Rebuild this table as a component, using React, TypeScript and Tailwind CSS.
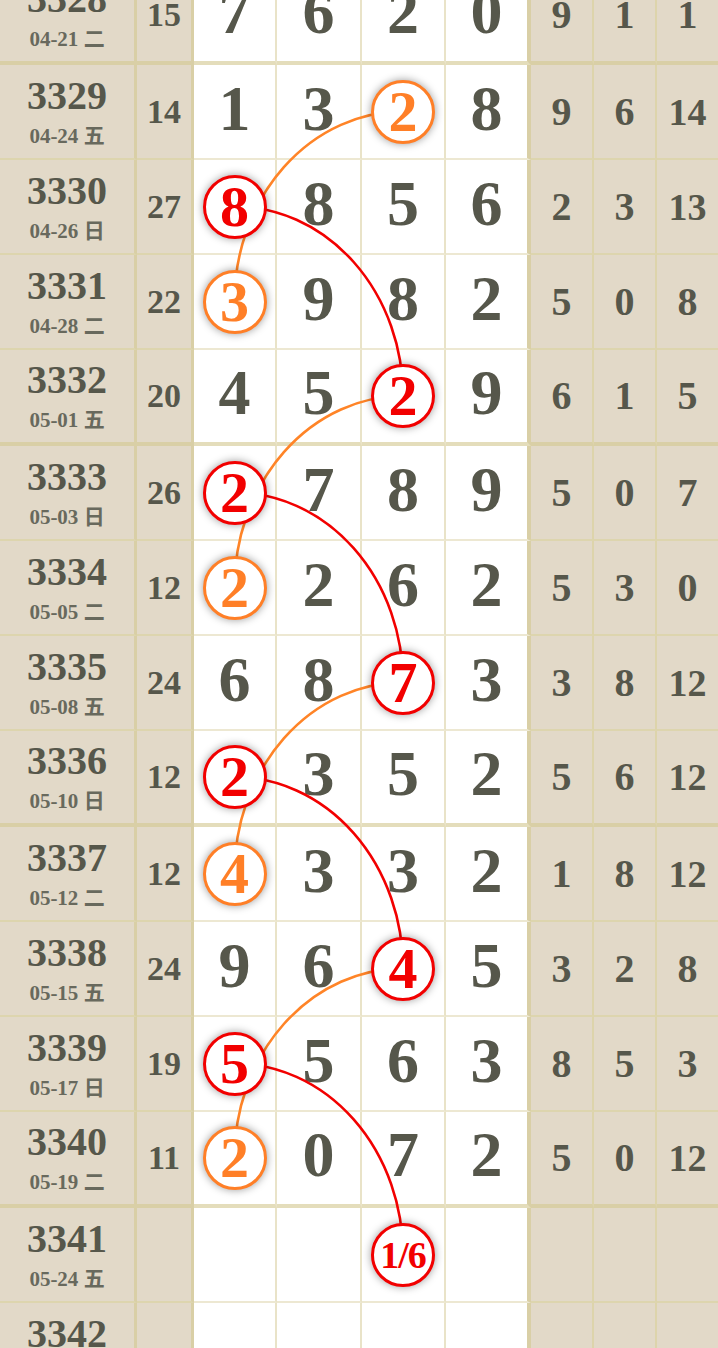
type Mark = { col: number; color: 'red' | 'orange'; text?: string }

type Row = {
  no: string
  date: string
  sum: string
  nums: string[]
  tail: string[]
  mark?: Mark
}

const rows: Row[] = [
  { no: '3328', date: '04-21 二', sum: '15', nums: ['7', '6', '2', '0'], tail: ['9', '1', '1'] },
  { no: '3329', date: '04-24 五', sum: '14', nums: ['1', '3', '2', '8'], tail: ['9', '6', '14'], mark: { col: 2, color: 'orange' } },
  { no: '3330', date: '04-26 日', sum: '27', nums: ['8', '8', '5', '6'], tail: ['2', '3', '13'], mark: { col: 0, color: 'red' } },
  { no: '3331', date: '04-28 二', sum: '22', nums: ['3', '9', '8', '2'], tail: ['5', '0', '8'], mark: { col: 0, color: 'orange' } },
  { no: '3332', date: '05-01 五', sum: '20', nums: ['4', '5', '2', '9'], tail: ['6', '1', '5'], mark: { col: 2, color: 'red' } },
  { no: '3333', date: '05-03 日', sum: '26', nums: ['2', '7', '8', '9'], tail: ['5', '0', '7'], mark: { col: 0, color: 'red' } },
  { no: '3334', date: '05-05 二', sum: '12', nums: ['2', '2', '6', '2'], tail: ['5', '3', '0'], mark: { col: 0, color: 'orange' } },
  { no: '3335', date: '05-08 五', sum: '24', nums: ['6', '8', '7', '3'], tail: ['3', '8', '12'], mark: { col: 2, color: 'red' } },
  { no: '3336', date: '05-10 日', sum: '12', nums: ['2', '3', '5', '2'], tail: ['5', '6', '12'], mark: { col: 0, color: 'red' } },
  { no: '3337', date: '05-12 二', sum: '12', nums: ['4', '3', '3', '2'], tail: ['1', '8', '12'], mark: { col: 0, color: 'orange' } },
  { no: '3338', date: '05-15 五', sum: '24', nums: ['9', '6', '4', '5'], tail: ['3', '2', '8'], mark: { col: 2, color: 'red' } },
  { no: '3339', date: '05-17 日', sum: '19', nums: ['5', '5', '6', '3'], tail: ['8', '5', '3'], mark: { col: 0, color: 'red' } },
  { no: '3340', date: '05-19 二', sum: '11', nums: ['2', '0', '7', '2'], tail: ['5', '0', '12'], mark: { col: 0, color: 'orange' } },
  { no: '3341', date: '05-24 五', sum: '', nums: ['', '', '1/6', ''], tail: ['', '', ''], mark: { col: 2, color: 'red', text: '1/6' } },
  { no: '3342', date: '05-26 日', sum: '', nums: ['', '', '', ''], tail: ['', '', ''] },
]

// last row of every group of four carries the thick line
const isThick = (k: number) => k % 4 === 0
const rowH = (k: number) => (isThick(k) ? 96 : 95)
const rowCenter = (k: number) => {
  let top = 0
  for (let i = 0; i < k; i++) top += rowH(i)
  return top + (isThick(k) ? 46 : 46.5)
}
const colX = [234.5, 318.5, 403]

// [fromRow, fromCol, toRow, toCol, color]
const arcs: [number, number, number, number, string][] = [
  [1, 2, 3, 0, '#ff8427'],
  [2, 0, 4, 2, '#f20000'],
  [4, 2, 6, 0, '#ff8427'],
  [5, 0, 7, 2, '#f20000'],
  [7, 2, 9, 0, '#ff8427'],
  [8, 0, 10, 2, '#f20000'],
  [10, 2, 12, 0, '#ff8427'],
  [11, 0, 13, 2, '#f20000'],
]

const serif = "font-['Liberation_Serif','Noto_Sans_CJK_SC',serif]"

function Ball({ mark, value }: { mark: Mark; value: string }) {
  const red = mark.color === 'red'
  return (
    <div
      className={`relative z-10 flex h-[64px] w-[64px] items-center justify-center rounded-full border-[3px] bg-white shadow-[0_0_8px_rgba(0,0,0,0.4)] ${
        red ? 'border-[#f20000] text-[#f20000]' : 'border-[#ff7f27] text-[#ff7f27]'
      }`}
    >
      {mark.text ? (
        <span className="text-[38px] leading-none tracking-[-1px]">{mark.text}</span>
      ) : (
        <span className="text-[58px] leading-none">{value}</span>
      )}
    </div>
  )
}

function TableRow({ row, k }: { row: Row; k: number }) {
  const thick = isThick(k)
  const beigeB = thick ? 'border-b-4 border-b-[#d9cfa6]' : 'border-b-2 border-b-[#ddd5ae]'
  const whiteB = thick ? 'border-b-4 border-b-[#e4ddbb]' : 'border-b-2 border-b-[#ede8d2]'
  const [datePart, week] = row.date.split(' ')

  return (
    <div className={`flex ${thick ? 'h-[96px]' : 'h-[95px]'}`}>
      <div className={`flex w-[137px] shrink-0 flex-col items-center justify-center border-r-[3px] border-r-[#d9cfa6] bg-[#e2d9c8] ${beigeB}`}>
        <span className="text-[40px] leading-[40px] text-[#56574b]">{row.no}</span>
        <span className="mt-[6px] text-[21px] leading-[24px] text-[#68695d]">
          {datePart} <span className="font-['Noto_Sans_CJK_SC',sans-serif] font-bold">{week}</span>
        </span>
      </div>
      <div className={`flex w-[57px] shrink-0 items-center justify-center border-r-[3px] border-r-[#d9cfa6] bg-[#e2d9c8] text-[34px] leading-none text-[#56574b] ${beigeB}`}>
        {row.sum}
      </div>
      {row.nums.map((n, i) => {
        const w = ['w-[83px]', 'w-[85px]', 'w-[84px]', 'w-[85px]'][i]
        const br = i === 3 ? 'border-r-4 border-r-[#d9cfa6]' : 'border-r-2 border-r-[#e9e3c8]'
        return (
          <div key={i} className={`flex ${w} shrink-0 items-center justify-center bg-white ${br} ${whiteB}`}>
            {row.mark && row.mark.col === i ? (
              <Ball mark={row.mark} value={n} />
            ) : (
              <span className="pb-[6px] text-[64px] leading-none text-[#56574b]">{n}</span>
            )}
          </div>
        )
      })}
      {row.tail.map((t, i) => (
        <div
          key={i}
          className={`flex items-center justify-center bg-[#e2d9c8] leading-none text-[#56574b] ${
            i === 2 ? 'flex-1' : 'w-[63px] shrink-0 border-r-2 border-r-[#ddd4ab]'
          } ${t.length > 1 ? 'text-[38px]' : 'text-[40px]'} ${beigeB}`}
        >
          {t}
        </div>
      ))}
    </div>
  )
}

export default function App() {
  return (
    <div className={`h-[1348px] w-full overflow-hidden bg-[#e2d9c8] font-bold ${serif}`}>
      <div className="relative -mt-[31px]">
        {rows.map((r, k) => (
          <TableRow key={r.no} row={r} k={k} />
        ))}
        <svg className="pointer-events-none absolute left-0 top-0" width="718" height="1440">
          {arcs.map(([r1, c1, r2, c2, color], i) => {
            const x1 = colX[c1]
            const y1 = rowCenter(r1)
            const x2 = colX[c2]
            const y2 = rowCenter(r2)
            const rx = Math.abs(x2 - x1)
            const ry = Math.abs(y2 - y1)
            const sweep = x2 < x1 ? 0 : 1
            return (
              <path
                key={i}
                d={`M ${x1} ${y1} A ${rx} ${ry} 0 0 ${sweep} ${x2} ${y2}`}
                fill="none"
                stroke={color}
                strokeWidth={2.6}
              />
            )
          })}
        </svg>
      </div>
    </div>
  )
}
